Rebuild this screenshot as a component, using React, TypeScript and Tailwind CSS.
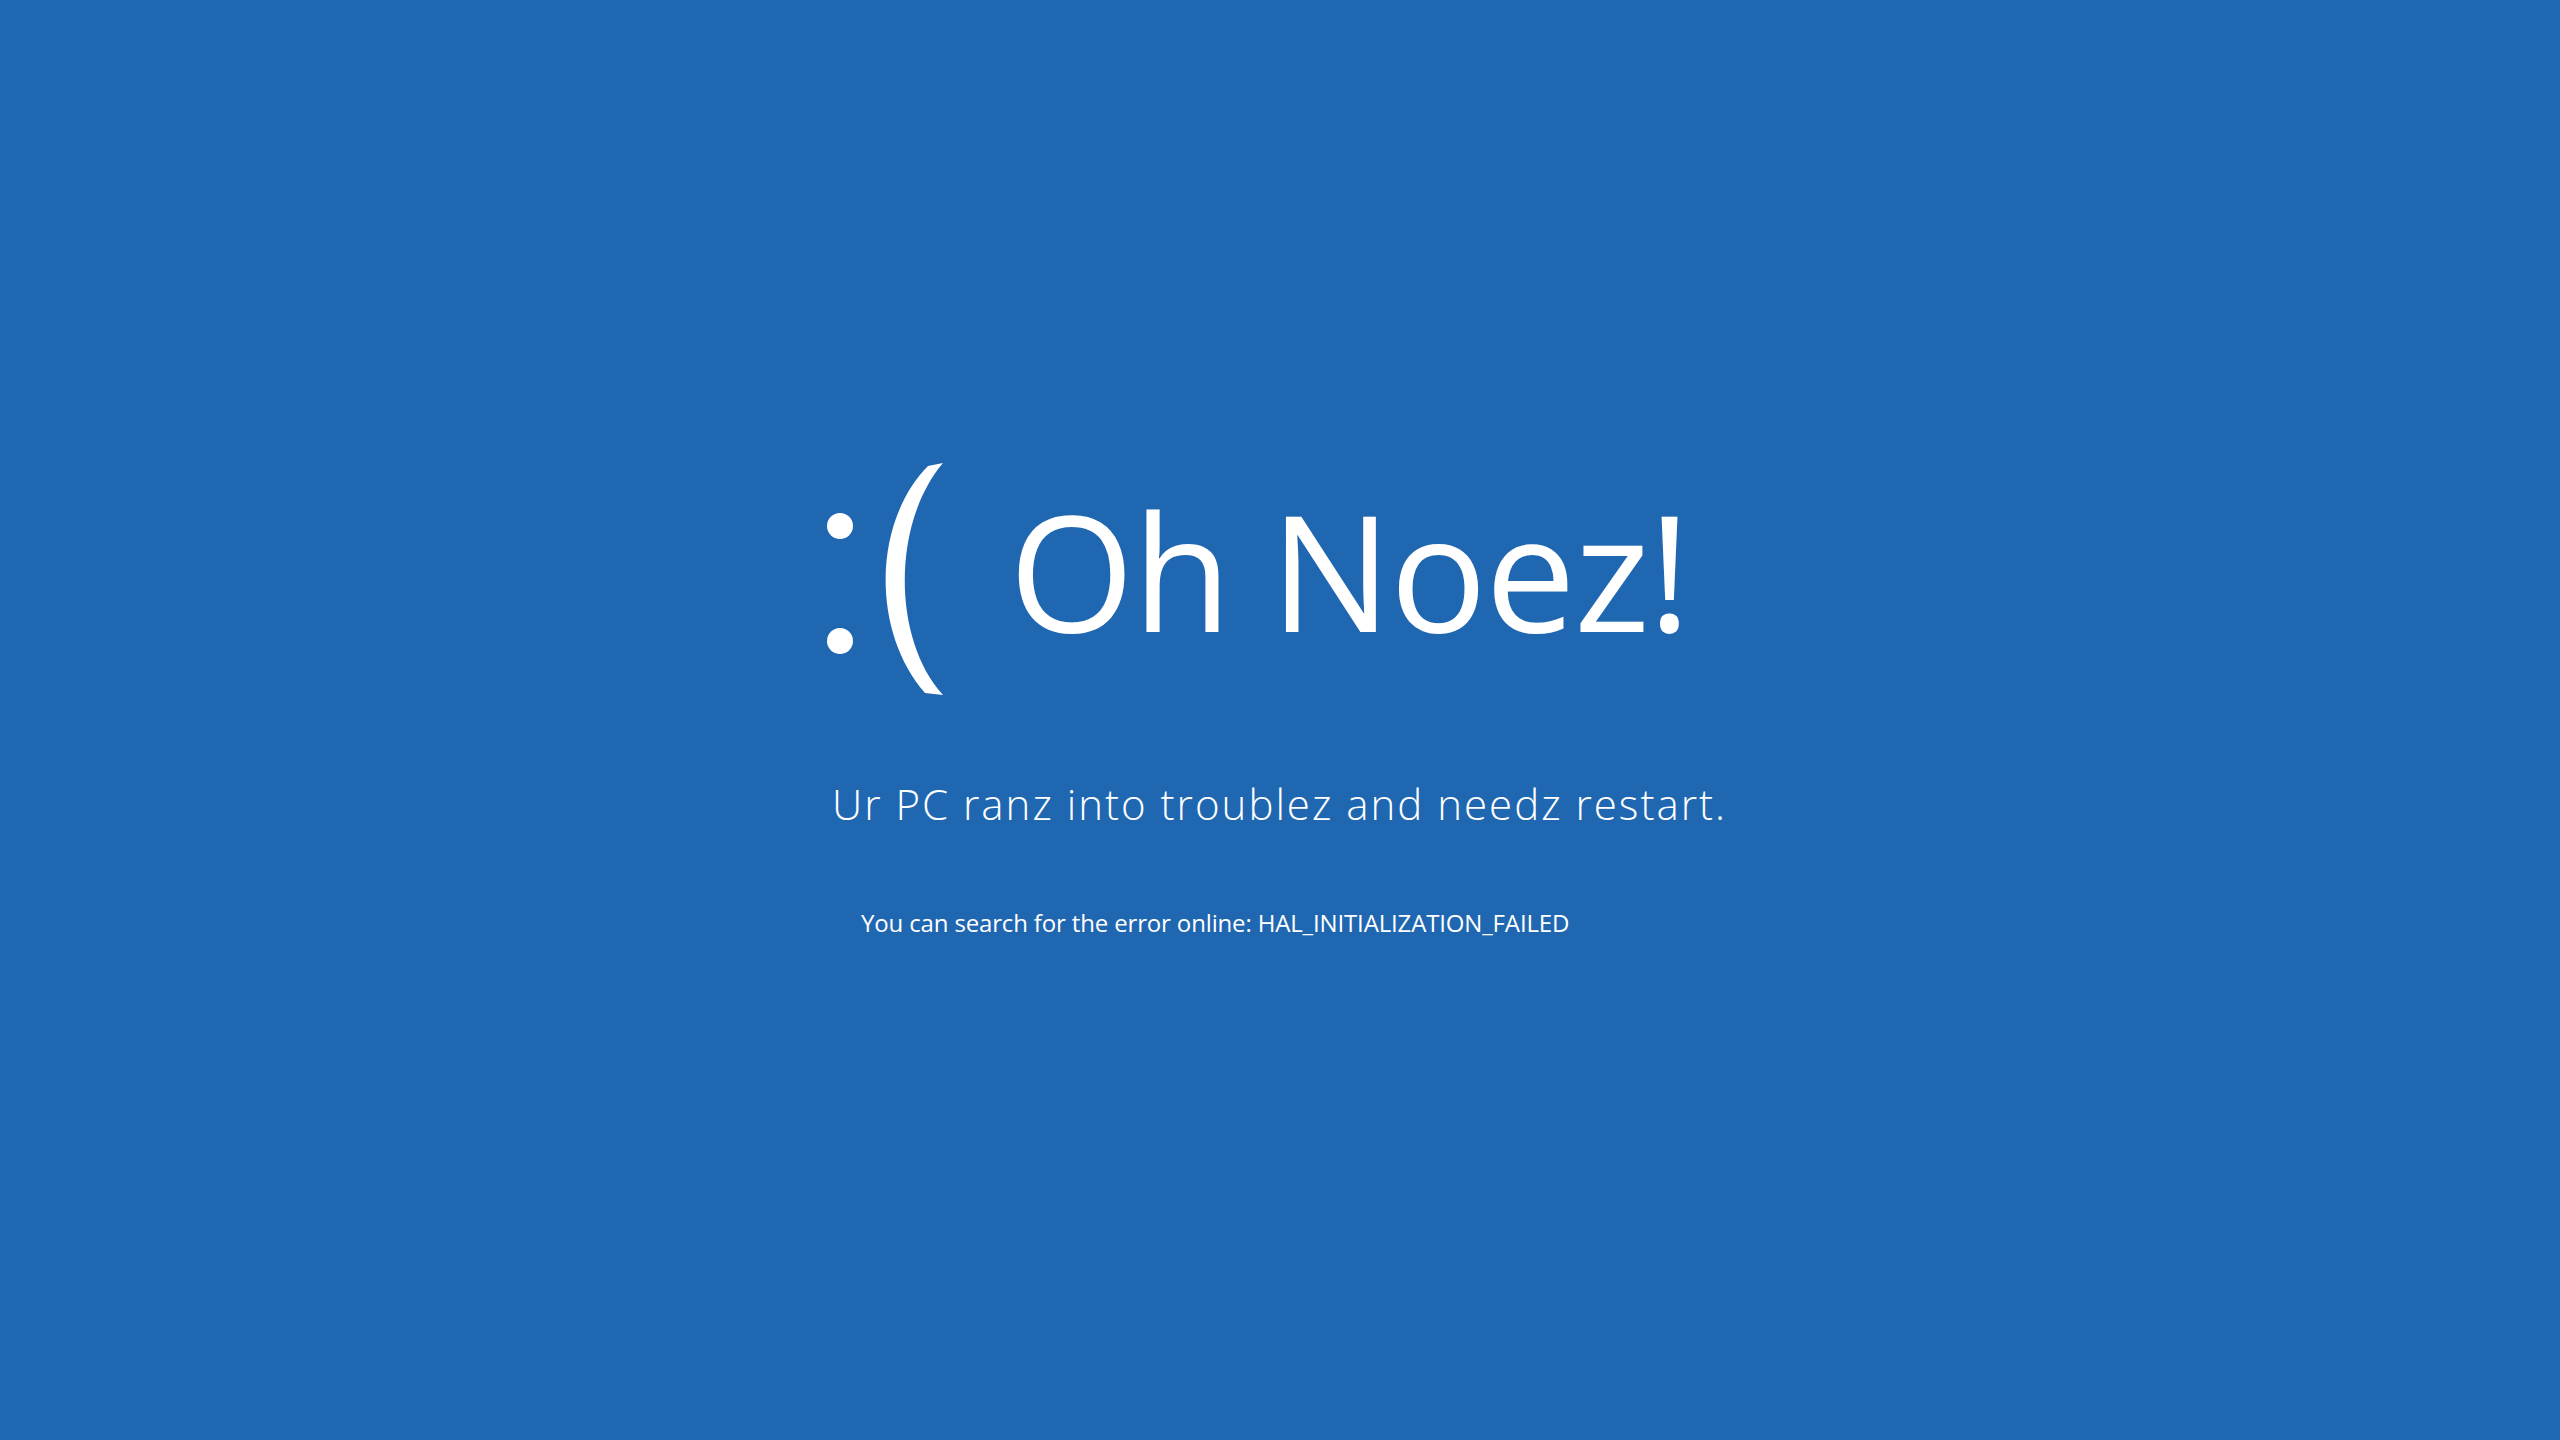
import React from "react";

function SadFace() {
  return (
    <svg width="120" height="236" viewBox="0 0 120 236" className="shrink-0 block">
      <circle cx="13" cy="63" r="13" fill="#ffffff" />
      <circle cx="13" cy="178" r="13" fill="#ffffff" />
      <path
        d="M 101 3 L 116 0 C 65 60 65 176 116 232 L 98 230 C 45 170 45 60 101 3 Z"
        fill="#ffffff"
      />
    </svg>
  );
}

export default function App() {
  return (
    <div
      className="w-full h-screen bg-[#2067b2] text-white overflow-hidden"
      style={{ fontFamily: '"Open Sans", "Noto Sans", sans-serif' }}
    >
      <div className="w-[900px] mx-auto pt-[463px] flex flex-col">
        <div className="flex items-start -ml-[3px]">
          <SadFace />
          <div className="ml-[62px] mt-[26px] text-[161px] leading-none font-normal tracking-[-1.5px] whitespace-nowrap">
            Oh Noez!
          </div>
        </div>
        <div className="mt-[84px] ml-[2px] text-[42px] leading-none font-[350] tracking-[2px] whitespace-nowrap">
          Ur PC ranz into troublez and needz restart.
        </div>
        <div className="mt-[86px] ml-[31px] text-[24px] leading-none font-normal tracking-[-0.15px] whitespace-nowrap">
          You can search for the error online: HAL_INITIALIZATION_FAILED
        </div>
      </div>
    </div>
  );
}
